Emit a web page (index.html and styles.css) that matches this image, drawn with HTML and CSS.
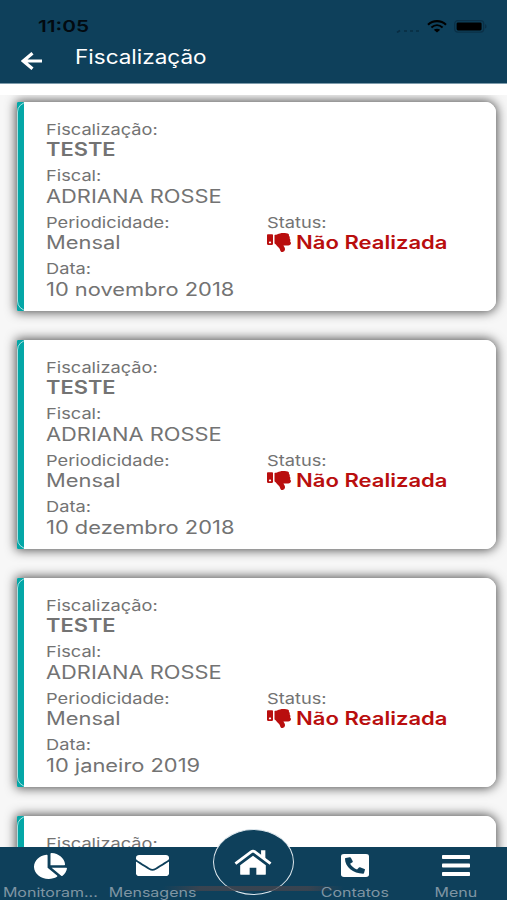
FILE: index.html
```
<!DOCTYPE html>
<html lang="pt-BR">

<head>
    <meta charset="UTF-8">
    <meta name="viewport" content="width=device-width, initial-scale=1.0">
    <title>Fiscalização</title>
    <link rel="stylesheet" href="styles.css">
</head>

<body>
    <svg class="symbols">
        <symbol id="thumbs-down" viewBox="0 0 512 512" preserveAspectRatio="none">
            <path d="M0 56v240c0 13.255 10.745 24 24 24h80c13.255 0 24-10.745 24-24V56c0-13.255-10.745-24-24-24H24C10.745 32 0 42.745 0 56zm40 200c0-13.255 10.745-24 24-24s24 10.745 24 24-10.745 24-24 24-24-10.745-24-24zm272 256c-20.183 0-29.485-39.293-33.931-57.795-5.206-21.666-10.589-44.07-25.393-58.902-32.469-32.524-49.503-73.967-89.117-113.111a11.98 11.98 0 0 1-3.558-8.521V59.901c0-6.541 5.243-11.878 11.783-11.998 15.831-.29 36.694-9.079 52.651-16.178C256.189 17.598 295.709.017 343.995 0h2.844c42.777 0 93.363.413 113.774 29.737 8.392 12.057 10.446 27.034 6.148 44.632 16.312 17.053 25.063 48.863 16.382 74.757 17.544 23.432 19.143 56.132 9.308 79.469l.11.11c11.893 11.949 19.523 31.259 19.439 49.197-.156 30.352-26.157 58.098-59.553 58.098H350.723C358.03 364.34 384 388.132 384 430.548 384 504 336 512 312 512z"/>
        </symbol>
    </svg>
    <div class="app">
        <header class="header">
            <div class="status-bar">
                <span class="time">11:05</span>
                <div class="status-icons">
                    <svg class="signal" viewBox="0 0 24 4">
                        <path d="M1 3.5l3-2M8 2h3M14 2h3M20 2h3" stroke="#092c42" stroke-width="1.6" fill="none"/>
                    </svg>
                    <svg class="wifi" viewBox="0 0 20 13">
                        <path d="M1 4.7C6-.1 14-.1 19 4.7" stroke="#000" stroke-width="2.2" fill="none"/>
                        <path d="M4.4 7.6C7.8 4.4 12.2 4.4 15.6 7.6" stroke="#000" stroke-width="2" fill="none"/>
                        <path d="M10 12.4L6.8 9.7C8.6 8.3 11.4 8.3 13.2 9.7z"/>
                    </svg>
                    <svg class="battery" viewBox="0 0 34 13">
                        <rect x=".7" y=".7" width="29" height="11.4" rx="3" fill="none" stroke="#0b3047" stroke-width="1.2"/>
                        <rect x="2.6" y="2.4" width="25" height="8" rx="1.4"/>
                        <path d="M31 4.2c2 .4 2 4 0 4.4z" fill="#0b3047"/>
                    </svg>
                </div>
            </div>
            <div class="title-bar">
                <svg class="back" viewBox="0 0 22 18">
                    <path d="M11.5 1.2L2.2 9l9.3 7.8M2.4 9H21" fill="none" stroke="#fff" stroke-width="3.2"/>
                </svg>
                <h1>Fiscalização</h1>
            </div>
        </header>

        <main class="list">
            <div class="card">
                <div class="field"><label>Fiscalização:</label><b>TESTE</b></div>
                <div class="field"><label>Fiscal:</label><span>ADRIANA ROSSE</span></div>
                <div class="row">
                    <div class="field"><label>Periodicidade:</label><span>Mensal</span></div>
                    <div class="field">
                        <label>Status:</label>
                        <div class="status"><svg><use href="#thumbs-down"/></svg><b>Não Realizada</b></div>
                    </div>
                </div>
                <div class="field"><label>Data:</label><span>10 novembro 2018</span></div>
            </div>
            <div class="card">
                <div class="field"><label>Fiscalização:</label><b>TESTE</b></div>
                <div class="field"><label>Fiscal:</label><span>ADRIANA ROSSE</span></div>
                <div class="row">
                    <div class="field"><label>Periodicidade:</label><span>Mensal</span></div>
                    <div class="field">
                        <label>Status:</label>
                        <div class="status"><svg><use href="#thumbs-down"/></svg><b>Não Realizada</b></div>
                    </div>
                </div>
                <div class="field"><label>Data:</label><span>10 dezembro 2018</span></div>
            </div>
            <div class="card">
                <div class="field"><label>Fiscalização:</label><b>TESTE</b></div>
                <div class="field"><label>Fiscal:</label><span>ADRIANA ROSSE</span></div>
                <div class="row">
                    <div class="field"><label>Periodicidade:</label><span>Mensal</span></div>
                    <div class="field">
                        <label>Status:</label>
                        <div class="status"><svg><use href="#thumbs-down"/></svg><b>Não Realizada</b></div>
                    </div>
                </div>
                <div class="field"><label>Data:</label><span>10 janeiro 2019</span></div>
            </div>
            <div class="card">
                <div class="field"><label>Fiscalização:</label></div>
            </div>
        </main>

        <nav class="tabs">
            <div class="indicator"></div>
            <div class="tab">
                <svg class="pie" viewBox="0 0 544 512" preserveAspectRatio="none">
                    <path d="M527.79 288H290.5l158.03 158.03c6.04 6.04 15.98 6.53 22.19.68 38.7-36.46 65.32-85.61 73.13-140.86 1.34-9.46-6.51-17.85-16.06-17.85zm-15.83-64.8C503.72 103.74 408.26 8.28 288.8.04 279.68-.59 272 7.1 272 16.24V240h223.77c9.14 0 16.82-7.68 16.19-16.8zM224 288V50.71c0-9.55-8.39-17.4-17.84-16.06C86.99 51.49-4.1 155.6.14 280.37 4.5 408.51 114.83 513.59 243.03 511.98c50.4-.63 96.97-16.87 135.26-44.03 7.9-5.6 8.42-17.23 1.57-24.08L224 288z"/>
                </svg>
                <span>Monitoram...</span>
            </div>
            <div class="tab">
                <svg class="mail" viewBox="0 64 512 384" preserveAspectRatio="none">
                    <path d="M502.3 190.8c3.9-3.1 9.7-.2 9.7 4.7V400c0 26.5-21.5 48-48 48H48c-26.5 0-48-21.5-48-48V195.6c0-5 5.7-7.8 9.7-4.7 22.4 17.4 52.1 39.5 154.1 113.6 21.1 15.4 56.7 47.8 92.2 47.6 35.7.3 72-32.8 92.3-47.6 102-74.1 131.6-96.3 154-113.7zM256 320c23.2.4 56.6-29.2 73.4-41.4 132.7-96.3 142.8-104.7 173.4-128.7 5.8-4.5 9.2-11.5 9.2-18.9v-19c0-26.5-21.5-48-48-48H48c-26.5 0-48 21.5-48 48v19c0 7.4 3.4 14.3 9.2 18.9 30.6 23.9 40.7 32.4 173.4 128.7 16.8 12.2 50.2 41.8 73.4 41.4z"/>
                </svg>
                <span>Mensagens</span>
            </div>
            <div class="tab">
                <div class="home">
                    <svg viewBox="0 0 40 28">
                        <path d="M1.5 15.2L18 2.8q2-1.5 4 0L38.5 15.2" fill="none" stroke="#fff" stroke-width="3"/>
                        <path d="M28.5 1H33v9.2l-4.5-3.3zM20 6.8L33.5 17v9q0 1-1.2 1H23.5v-7.5h-7V27H7.7q-1.2 0-1.2-1v-9z"/>
                    </svg>
                </div>
            </div>
            <div class="tab">
                <svg class="phone" viewBox="0 32 448 448" preserveAspectRatio="none">
                    <path transform="matrix(-1 0 0 1 448 0)" d="M400 32H48A48 48 0 0 0 0 80v352a48 48 0 0 0 48 48h352a48 48 0 0 0 48-48V80a48 48 0 0 0-48-48zM94 416c-7.033 0-13.057-4.873-14.616-11.627l-14.998-65a15 15 0 0 1 8.707-17.16l69.998-29.999a15 15 0 0 1 17.518 4.289l30.997 37.885c48.944-22.963 88.297-62.858 110.781-110.78l-37.886-30.997a15.001 15.001 0 0 1-4.289-17.518l30-69.998a15 15 0 0 1 17.16-8.707l65 14.998A14.997 14.997 0 0 1 384 126c0 160.292-129.945 290-290 290z"/>
                </svg>
                <span>Contatos</span>
            </div>
            <div class="tab">
                <svg class="menu" viewBox="0 0 28 21">
                    <rect width="28" height="4" rx=".8"/>
                    <rect y="8.5" width="28" height="4" rx=".8"/>
                    <rect y="17" width="28" height="4" rx=".8"/>
                </svg>
                <span>Menu</span>
            </div>
        </nav>
    </div>
</body>

</html>
```
FILE: styles.css
```
* {
    margin: 0;
    padding: 0;
    box-sizing: border-box;
}

body {
    font-family: Inter, "Liberation Sans", sans-serif;
    background-color: #fff;
}

svg {
    display: block;
}

.symbols {
    display: none;
}

.app {
    height: 900px;
    display: flex;
    flex-direction: column;
    overflow: hidden;
}

.header {
    flex: none;
    height: 84px;
    background-color: #0e405b;
    border-bottom: 1px solid #7d9bab;
}

.status-bar {
    height: 42px;
    padding: 11px 19px 0 38px;
    display: flex;
    justify-content: space-between;
}

.time {
    font-size: 16.5px;
    font-weight: 600;
    line-height: 31px;
    color: #020a10;
    transform: scaleX(1.26);
    transform-origin: left;
}

.status-icons {
    display: flex;
    align-items: center;
    height: 31px;
}

.signal {
    width: 24px;
    height: 4px;
    margin: 8px 7px 0 0;
}

.wifi {
    width: 20px;
    height: 13px;
    margin-right: 7px;
}

.battery {
    width: 34px;
    height: 13px;
}

.title-bar {
    display: flex;
    padding-left: 21px;
}

.back {
    width: 22px;
    height: 18px;
    margin-top: 10px;
}

.title-bar h1 {
    margin-left: 32px;
    font-size: 19.5px;
    font-weight: 400;
    line-height: 31px;
    color: #fff;
    transform: scaleX(1.155);
    transform-origin: left;
}

.list {
    flex: 1;
    margin-top: 11px;
    padding: 7px 11px 0 17px;
    overflow: hidden;
    background-color: #f7f7f7;
}

.card {
    position: relative;
    height: 209px;
    margin-bottom: 29px;
    padding: 18px 0 0 28.5px;
    color: #737373;
    background: linear-gradient(to right, #04a7a7 7px, #fff 7px);
    border-radius: 1px 11px 11px 1px;
    box-shadow: 0 0 11px 1px rgba(0, 0, 0, .7);
}

/* rounded outline over the coloured strip */
.card::before {
    content: "";
    position: absolute;
    inset: 0;
    border: 1px solid rgba(255, 255, 255, .65);
    border-radius: 10px;
}

.field {
    height: 46.4px;
    display: flex;
    flex-direction: column;
    align-items: flex-start;
}

.field label,
.field span,
.field b {
    white-space: nowrap;
    transform: scaleX(1.215);
    transform-origin: left;
}

.field label {
    font-size: 15px;
    line-height: 19.4px;
}

.field span,
.field b {
    font-size: 18px;
    line-height: 22px;
}

.field b {
    font-weight: 600;
}

.row {
    display: grid;
    grid-template-columns: 221.5px 1fr;
}

.status {
    display: flex;
    color: #b90e0e;
}

.status b {
    transform: scaleX(1.225);
}

.status svg {
    width: 24px;
    height: 19px;
    margin: 1px 5px 0 -.5px;
    fill: #b90e0e;
}

.tabs {
    position: relative;
    flex: none;
    height: 53px;
    display: grid;
    grid-template-columns: repeat(5, 1fr);
    background-color: #0e405b;
}

.tab {
    display: flex;
    flex-direction: column;
    align-items: center;
}

.tab svg {
    fill: #fff;
}

.tab span {
    position: relative;
    margin-top: auto;
    font-size: 12.6px;
    line-height: 15px;
    color: #7f95a3;
    transform: scaleX(1.27);
}

.pie {
    width: 33px;
    height: 26px;
    margin-top: 6px;
}

.mail {
    width: 33px;
    height: 21px;
    margin-top: 8px;
}

.phone {
    width: 28px;
    height: 23px;
    margin-top: 7px;
}

.menu {
    width: 28px;
    height: 21px;
    margin-top: 8px;
}

.home {
    flex: none;
    width: 81px;
    height: 66px;
    margin-top: -18px;
    display: flex;
    align-items: center;
    justify-content: center;
    background-color: #0e405b;
    border: 1.5px solid #dfe8ee;
    border-radius: 50%;
}

.home svg {
    width: 38px;
    height: 27px;
}

.indicator {
    position: absolute;
    left: 163px;
    top: 39px;
    width: 181px;
    height: 5px;
    background: linear-gradient(to right, transparent, #46454d 20%, #46454d 80%, transparent);
    opacity: .75;
}
```
